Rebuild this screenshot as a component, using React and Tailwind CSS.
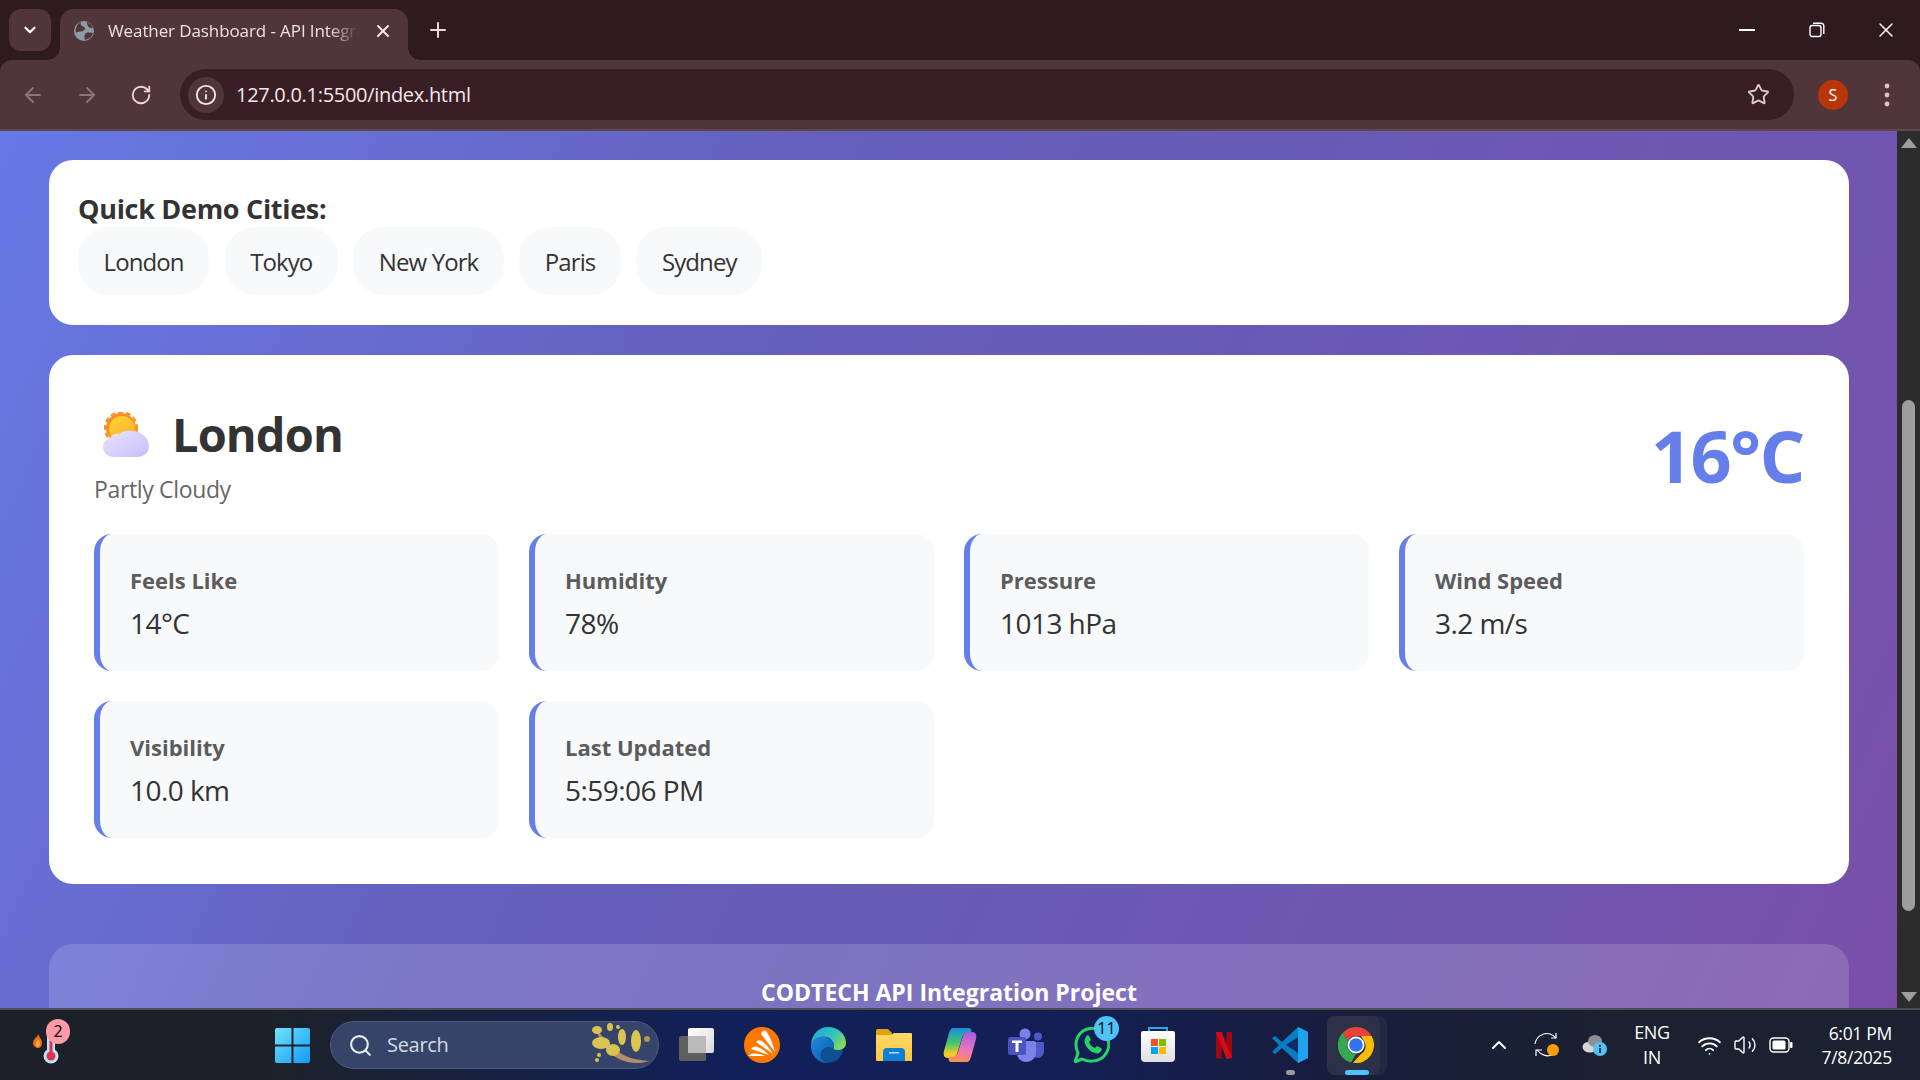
import React from 'react';
import { ArrowLeft, ArrowRight, RotateCw, Info, Star, X, Plus, ChevronDown, ChevronUp, Search, Wifi, Volume2 } from 'lucide-react';

const cities = ['London', 'Tokyo', 'New York', 'Paris', 'Sydney'];

const details = [
  { label: 'Feels Like', value: '14°C' },
  { label: 'Humidity', value: '78%' },
  { label: 'Pressure', value: '1013 hPa' },
  { label: 'Wind Speed', value: '3.2 m/s' },
  { label: 'Visibility', value: '10.0 km' },
  { label: 'Last Updated', value: '5:59:06 PM' },
];

const PartlyCloudy = () => (
  <svg width="48" height="46" viewBox="0 0 48 46">
    <defs>
      <linearGradient id="sunFill" x1="0" y1="0" x2="0.6" y2="1">
        <stop offset="0" stopColor="#fdd835" />
        <stop offset="1" stopColor="#fbb02d" />
      </linearGradient>
      <linearGradient id="cloudFill" x1="0" y1="0" x2="1" y2="1">
        <stop offset="0" stopColor="#e9e3ff" />
        <stop offset="1" stopColor="#c6c0fa" />
      </linearGradient>
    </defs>
    <circle cx="18" cy="16" r="15" fill="#fb8c1f" />
    <circle cx="18" cy="16" r="16" fill="none" stroke="#fb8c1f" strokeWidth="2" strokeDasharray="5 3" />
    <circle cx="19" cy="17" r="13" fill="url(#sunFill)" />
    <path d="M11 45C4 45 0 40 0 35c0-5 3-8 7-9 2-4 6-5 9-4 3-3 8-4 13-3 8 0 17 6 17 15 0 7-5 11-12 11z" fill="url(#cloudFill)" />
  </svg>
);

const Globe = () => (
  <svg width="22" height="22" viewBox="0 0 22 22">
    <circle cx="11" cy="11" r="10" fill="#8e9ba3" />
    <path d="M8 2c-1 3 1 4 3 5 2 1 1 3-1 4-3 1-5 0-7 2-1-5 1-9 5-11zM13 13c3-1 5 0 7 0-1 4-4 6-8 7-1-3-1-5 1-7zM14 2c3 1 5 3 6 6-2 0-4 0-5-2-1-1-1-3-1-4z" fill="#50363b" />
  </svg>
);

const ChromeDots = () => (
  <svg width="8" height="26" viewBox="0 0 8 26" fill="#e6bfc6">
    <circle cx="4" cy="4" r="2.4" />
    <circle cx="4" cy="13" r="2.4" />
    <circle cx="4" cy="22" r="2.4" />
  </svg>
);

const Restore = () => (
  <svg width="16" height="16" viewBox="0 0 16 16" fill="none" stroke="#fff" strokeWidth="1.4">
    <rect x="1" y="3.5" width="11" height="11" rx="2.2" />
    <path d="M4 1.2h8c1.6 0 2.8 1.2 2.8 2.8v8" />
  </svg>
);

const Thermo = () => (
  <div className="relative w-[44px] h-[48px]">
    <svg className="absolute left-0 top-[10px]" width="44" height="38" viewBox="0 0 44 38">
      <path d="M12 3c1 3 4 5 4 9 0 3-2 5-4 5s-5-2-5-5c0-3 2-4 3-6 1 1 1 0 2-3z" fill="#f26b21" />
      <path d="M12 8c1 2 2 3 2 4s-1 4-2 4-3-2-2-3c0-2 1-3 2-5z" fill="#fbb02d" />
      <rect x="21" y="0" width="8" height="24" rx="4" fill="#bfe3f7" />
      <circle cx="25" cy="25" r="7.5" fill="#bfe3f7" />
      <rect x="23.5" y="8" width="3" height="16" fill="#e0324f" />
      <circle cx="25" cy="25" r="4.5" fill="#e0324f" />
    </svg>
    <span className="absolute left-[20px] -top-[2px] w-[24px] h-[25px] rounded-full bg-[#ff9ba6] text-black text-[16px] leading-[25px] text-center">2</span>
  </div>
);

const WinLogo = () => (
  <svg width="35" height="35" viewBox="0 0 35 35">
    <defs>
      <linearGradient id="winFill" x1="0" y1="0" x2="1" y2="1">
        <stop offset="0" stopColor="#6fe3fb" />
        <stop offset="1" stopColor="#0f9bf6" />
      </linearGradient>
    </defs>
    <path d="M0 2a2 2 0 0 1 2-2h14.5v16.5H0zM18.500 0H33a2 2 0 0 1 2 2v14.500H18.500zM0 18.500h16.500V35H2a2 2 0 0 1-2-2zM18.500 18.500H35V33a2 2 0 0 1-2 2H18.500z" fill="url(#winFill)" />
  </svg>
);

const Blossom = () => (
  <svg width="60" height="44" viewBox="0 0 60 44">
    <path d="M4 5c7 7 12 15 22 23 8 6 18 9 32 10-8 3-20 3-30-2C16 30 9 18 4 5z" fill="#b58d6b" />
    <g fill="#d9c44f">
      <ellipse cx="6" cy="7" rx="5" ry="4" />
      <ellipse cx="19" cy="4" rx="3" ry="4" />
      <ellipse cx="31" cy="14" rx="4" ry="8" />
      <ellipse cx="45" cy="18" rx="5" ry="11" />
      <ellipse cx="10" cy="20" rx="9" ry="6" />
      <ellipse cx="22" cy="27" rx="7" ry="6" />
      <circle cx="56" cy="16" r="3" fill="#a99d4a" />
      <circle cx="27" cy="4" r="2" />
      <circle cx="8" cy="32" r="2" />
      <circle cx="6" cy="37" r="2" />
    </g>
  </svg>
);

const TaskView = () => (
  <svg width="36" height="36" viewBox="0 0 36 36">
    <defs>
      <linearGradient id="tvFront" x1="0" y1="0" x2="1" y2="1">
        <stop offset="0" stopColor="#ffffff" />
        <stop offset="1" stopColor="#d8d8d8" />
      </linearGradient>
    </defs>
    <rect x="10" y="1" width="26" height="25" rx="2" fill="url(#tvFront)" />
    <rect x="1" y="9" width="27" height="25" rx="2" fill="#5f5f5f" />
    <path d="M10 11a2 2 0 0 1 0-2h18v17H10z" fill="#b9b9b9" />
  </svg>
);

const Avast = () => (
  <svg width="36" height="36" viewBox="0 0 36 36">
    <circle cx="18" cy="18" r="18" fill="#ff7800" />
    <path d="M17 7c1-3 3-4 5-3 4 5 7 14 9 21zM12 15c2-2 4-2 6-1 4 3 8 8 11 13zM7 22c1-2 4-3 6-2 4 1 8 4 12 8zM4 29l3-2c5-1 10 0 14 2z" fill="#fff" />
  </svg>
);

const Edge = () => (
  <svg width="36" height="36" viewBox="0 0 36 36">
    <defs>
      <linearGradient id="edgeTop" x1="0" y1="0" x2="1" y2="0.6">
        <stop offset="0" stopColor="#1aa5d8" />
        <stop offset="0.6" stopColor="#35c1c1" />
        <stop offset="1" stopColor="#7edb5d" />
      </linearGradient>
      <linearGradient id="edgeLow" x1="0" y1="0" x2="1" y2="1">
        <stop offset="0" stopColor="#1f8ade" />
        <stop offset="1" stopColor="#0c59a4" />
      </linearGradient>
    </defs>
    <path d="M18 0c10 0 18 7 18 16 0 4-3 7-7 7h-6c3-6-1-12-7-13C10 9 4 12 1 17 2 7 9 0 18 0z" fill="url(#edgeTop)" />
    <path d="M1 17c3-6 9-8 15-7 4 1 8 4 8 9 0 1 0 2-1 3-4-3-11-1-12 4-1 4 2 8 6 10C8 36 0 28 1 17z" fill="url(#edgeLow)" />
    <path d="M11 26c1-5 8-7 12-4 2 1 4 1 6 1h4c-1 6-6 13-16 13-4-2-7-6-6-10z" fill="#0f4f95" />
  </svg>
);

const Folder = () => (
  <svg width="36" height="32" viewBox="0 0 36 32">
    <defs>
      <linearGradient id="folderFill" x1="0" y1="0" x2="0" y2="1">
        <stop offset="0" stopColor="#ffd968" />
        <stop offset="1" stopColor="#fcc83d" />
      </linearGradient>
    </defs>
    <path d="M0 2a2 2 0 0 1 2-2h10l4 4v4H0z" fill="#e5a20f" />
    <path d="M0 6h15l3-2h17a1 1 0 0 1 1 1v27H1a1 1 0 0 1-1-1z" fill="url(#folderFill)" />
    <path d="M7 32v-9a4 4 0 0 1 4-4h14a4 4 0 0 1 4 4v9z" fill="#0d7fd6" />
    <rect x="13" y="23" width="10" height="1.500" fill="#b7defa" />
  </svg>
);

const Copilot = () => (
  <svg width="34" height="34" viewBox="0 0 34 34">
    <defs>
      <linearGradient id="copA" x1="0.3" y1="0" x2="0.3" y2="1">
        <stop offset="0" stopColor="#1b8ae6" />
        <stop offset="0.5" stopColor="#43c86b" />
        <stop offset="0.85" stopColor="#f6c92c" />
      </linearGradient>
      <linearGradient id="copB" x1="0.6" y1="0" x2="0.4" y2="1">
        <stop offset="0" stopColor="#a85ee6" />
        <stop offset="0.6" stopColor="#ee77b7" />
        <stop offset="1" stopColor="#fb8f4a" />
      </linearGradient>
    </defs>
    <path d="M10 0h15c3 0 4 2 3 5-5-1-8 1-9 5l-5 16c-1 3-4 4-7 4H5c-4 0-5-3-4-7L6 5c1-3 2-5 4-5z" fill="url(#copA)" />
    <path d="M24 34H9c-3 0-4-2-3-5 5 1 8-1 9-5l5-16c1-3 4-4 7-4h2c4 0 5 3 4 7l-5 18c-1 3-2 5-4 5z" fill="url(#copB)" />
  </svg>
);

const Teams = () => (
  <svg width="36" height="34" viewBox="0 0 36 34">
    <circle cx="17" cy="6" r="5.500" fill="#7b83eb" />
    <circle cx="30" cy="8.500" r="4" fill="#5059c9" />
    <path d="M25 14h10a1 1 0 0 1 1 1v8c0 4-3 7-6 7s-5-2-5-4z" fill="#5059c9" />
    <path d="M9 13h17a2 2 0 0 1 2 2v10c0 5-5 9-10 9s-9-4-9-9z" fill="#7b83eb" />
    <rect x="0" y="9" width="18" height="18" rx="2" fill="#4b53bc" />
    <path d="M4 12.500h10v2.500h-3.500v9h-3v-9H4z" fill="#fff" />
  </svg>
);

const WhatsApp = () => (
  <svg width="36" height="36" viewBox="0 0 36 36">
    <path d="M1 35l3-9C0 18 2 9 9 4c8-5 18-3 23 4 5 8 3 17-4 23-6 4-14 4-20 1z" fill="none" stroke="#25d366" strokeWidth="3" strokeLinejoin="round" />
    <path d="M12 10c-2 2-2 5 0 9 2 3 5 6 9 7 3 1 5 0 6-2 1-1 1-2 0-3l-4-2-2 2c-3-1-5-3-6-6l2-2-2-4c-1-1-2-1-3 1z" fill="#25d366" />
  </svg>
);

const Store = () => (
  <svg width="36" height="36" viewBox="0 0 36 36">
    <defs>
      <linearGradient id="bagFill" x1="0" y1="0" x2="0" y2="1">
        <stop offset="0" stopColor="#ffffff" />
        <stop offset="1" stopColor="#dfdfdf" />
      </linearGradient>
    </defs>
    <path d="M9 6V1h18v5" fill="none" stroke="#29a8e8" strokeWidth="2" />
    <path d="M3 4h30a2 2 0 0 1 2 2v25a4 4 0 0 1-4 4H5a4 4 0 0 1-4-4V6a2 2 0 0 1 2-2z" fill="url(#bagFill)" />
    <rect x="11" y="12" width="7" height="7" fill="#f25022" />
    <rect x="19" y="12" width="7" height="7" fill="#7fba00" />
    <rect x="11" y="20" width="7" height="7" fill="#00a4ef" />
    <rect x="19" y="20" width="7" height="7" fill="#ffb900" />
  </svg>
);

const NetflixMark = () => (
  <svg width="16" height="27" viewBox="0 0 16 27">
    <path d="M0 0h5.500v27L0 26z" fill="#a30812" />
    <path d="M10.500 0H16v26l-5.500 1z" fill="#a30812" />
    <path d="M0 0h5.500L16 26l-5.500 1z" fill="#d80a14" />
  </svg>
);

const VsCode = () => (
  <svg width="36" height="36" viewBox="0 0 36 36">
    <path d="M26 0l10 5v26l-10 5-16-15L3 27l-3-2 7-7-7-7 3-2 7 6z" fill="#0a7cc4" />
    <path d="M26 0l10 5v26l-10 5z" fill="#1fa3ee" />
    <path d="M26 10L14 18l12 8z" fill="#0e2050" opacity="0.85" />
  </svg>
);

const ChromeLogo = () => (
  <svg width="36" height="36" viewBox="0 0 36 36">
    <path d="M18 0a18 18 0 0 1 15.600 9H18a9 9 0 0 0-8 5L4.600 6A18 18 0 0 1 18 0z" fill="#ea4335" />
    <path d="M4.600 6L10 14a9 9 0 0 0 8 13l-5 8.600A18 18 0 0 1 4.600 6z" fill="#34a853" />
    <path d="M33.600 9A18 18 0 0 1 15 35.800L23 27a9 9 0 0 0 3-13l-3-5z" fill="#fbbc04" />
    <circle cx="18" cy="18" r="8.500" fill="#fff" />
    <circle cx="18" cy="18" r="6.800" fill="#2f75e8" />
  </svg>
);

const SyncDot = () => (
  <svg width="26" height="26" viewBox="0 0 26 26">
    <g fill="none" stroke="#fff" strokeWidth="1.200">
      <path d="M1 12C2 5 9 0 16 2c2 .6 4 2 6 4" />
      <path d="M22 1v5h-5" />
      <path d="M18 23c-5 2-11 0-15-5" />
      <path d="M2 24v-6h6" />
    </g>
    <circle cx="19" cy="18" r="6" fill="#ff9d00" />
  </svg>
);

const CloudInfo = () => (
  <svg width="26" height="24" viewBox="0 0 26 24">
    <ellipse cx="8" cy="14" rx="7.500" ry="5.500" fill="#d6d6d6" />
    <ellipse cx="13" cy="8" rx="7" ry="6" fill="#8d8f94" />
    <circle cx="18" cy="16" r="7" fill="#4fc3f7" />
    <rect x="17" y="15" width="2" height="5" fill="#10243c" />
    <rect x="17" y="11.800" width="2" height="2" fill="#10243c" />
  </svg>
);

const Battery = () => (
  <svg width="24" height="16" viewBox="0 0 24 16">
    <rect x="1" y="1" width="19" height="14" rx="3.500" fill="none" stroke="#fff" strokeWidth="1.400" />
    <rect x="3.500" y="3.500" width="13" height="9" rx="1.500" fill="#fff" />
    <rect x="21" y="5" width="2.500" height="6" rx="1" fill="#fff" />
  </svg>
);

const dockIcons = [TaskView, Avast, Edge, Folder, Copilot, Teams, WhatsApp, Store, NetflixMark, VsCode];

const App = () => {
  return (
    <div className="w-[1920px] h-[1080px] flex flex-col overflow-hidden font-['Open_Sans',sans-serif]">
      {/* browser chrome */}
      <div className="h-[131px] shrink-0 bg-[#2f1a20] flex flex-col">
        <div className="h-[60px] flex items-end shrink-0">
          <div className="w-[42px] h-[42px] ml-[9px] mb-[9px] rounded-[12px] bg-[#50363b] flex items-center justify-center">
            <ChevronDown size={18} strokeWidth={3} className="text-white" />
          </div>
          <div className="relative w-[348px] h-[51px] ml-[9px] rounded-t-[14px] bg-[#50363b] flex items-center pl-[13px] pb-[8px]">
            <span className="absolute -left-[12px] bottom-0 w-[12px] h-[12px] bg-[radial-gradient(circle_at_0_0,#2f1a20_11.5px,#50363b_12px)]"></span>
            <span className="absolute -right-[12px] bottom-0 w-[12px] h-[12px] bg-[radial-gradient(circle_at_100%_0,#2f1a20_11.5px,#50363b_12px)]"></span>
            <Globe />
            <span className="ml-[12px] w-[252px] pl-[1px] text-[17px] text-[#f0dfe2] whitespace-nowrap overflow-hidden tracking-[-0.1px] [mask-image:linear-gradient(to_right,black_88%,transparent_100%)]">
              Weather Dashboard - API Integration Project
            </span>
            <X size={20} strokeWidth={2.4} className="ml-[14px] text-[#f5e6e9]" />
          </div>
          <Plus size={24} strokeWidth={2} className="ml-[18px] mb-[18px] text-[#f0d4d9]" />
          <div className="ml-auto flex items-center h-[60px]">
            <div className="w-[70px] flex justify-center"><div className="w-[16px] h-[2px] bg-white"></div></div>
            <div className="w-[70px] flex justify-center"><Restore /></div>
            <div className="w-[68px] flex justify-center"><X size={24} strokeWidth={1.5} className="text-white" /></div>
          </div>
        </div>
        <div className="flex-1 bg-[#50363b] rounded-t-[12px] border-b-2 border-[#5d474b] flex items-center">
          <div className="w-[180px] shrink-0 flex items-center text-[#8f7478] pl-[21px]">
            <ArrowLeft size={24} strokeWidth={1.8} />
            <ArrowRight size={24} strokeWidth={1.8} className="ml-[30px]" />
            <RotateCw size={22} strokeWidth={2} className="ml-[31px] text-[#f0d4d9]" />
          </div>
          <div className="w-[1614px] h-[51px] rounded-full bg-[#381f25] flex items-center pl-[8px]">
            <div className="w-[36px] h-[36px] rounded-full bg-[#50363b] flex items-center justify-center">
              <Info size={22} strokeWidth={2} className="text-[#f5e6e9]" />
            </div>
            <span className="ml-[12px] text-[20px] text-[#f5e6e9] tracking-[-0.3px]">127.0.0.1:5500/index.html</span>
            <Star size={23} strokeWidth={2} className="ml-auto mr-[24px] text-[#dcc6ca]" />
          </div>
          <div className="ml-[24px] w-[30px] h-[30px] rounded-full bg-[#bb350b] text-white text-[16px] flex items-center justify-center">S</div>
          <div className="ml-[35px]"><ChromeDots /></div>
        </div>
      </div>

      {/* page */}
      <div className="flex-1 min-h-0 flex">
        <div className="w-[1897px] h-full overflow-hidden pl-[49px] pr-[48px] pt-[29px] bg-[linear-gradient(115deg,#6679e6_0%,#686dd2_18%,#6460bd_35%,#675cb6_52%,#7056b0_82%,#7a4ea8_100%)]">
          <div className="h-[165px] bg-white rounded-[24px] pl-[29px] pr-[30px] pt-[30px]">
            <h3 className="text-[27px] leading-[37px] font-bold text-[#333] tracking-[-0.3px]">Quick Demo Cities:</h3>
            <div className="flex gap-[15.500px]">
              {cities.map((city) => (
                <button key={city} className="h-[68px] px-[25.500px] pt-[1px] rounded-[31px] bg-[#f8f9fa] text-[24px] text-[#333] tracking-[-0.9px]">
                  {city}
                </button>
              ))}
            </div>
          </div>

          <div className="mt-[30px] h-[529px] bg-white rounded-[24px] p-[45px]">
            <div className="flex items-center justify-between h-[134px] pb-[30px]">
              <div>
                <div className="flex items-center h-[70px]">
                  <div className="ml-[9px] mr-[21px]"><PartlyCloudy /></div>
                  <h2 className="pb-[2px] text-[47px] font-bold text-[#333] leading-none tracking-[-0.9px]">London</h2>
                </div>
                <p className="mt-[4px] text-[23px] text-[#666] leading-[30px] tracking-[-0.35px]">Partly Cloudy</p>
              </div>
              <div className="pt-[6px] text-[72px] font-bold text-[#667eea] leading-none tracking-[-1.5px]">16°C</div>
            </div>
            <div className="grid grid-cols-4 gap-x-[30px] gap-y-[30px]">
              {details.map((item) => (
                <div key={item.label} className="h-[137px] bg-[#f8f9fa] rounded-[18px] border-l-[6px] border-[#667eea] pl-[30px] pt-[31px]">
                  <div className="text-[22px] font-bold text-[#5c5c5c] leading-[30px]">{item.label}</div>
                  <div className="mt-[10px] text-[28px] text-[#333] leading-[36px] tracking-[-0.55px]">{item.value}</div>
                </div>
              ))}
            </div>
          </div>

          <div className="mt-[60px] h-[100px] rounded-t-[24px] bg-white/15 pt-[30px] text-center">
            <p className="text-[23px] leading-[36px] font-bold text-white">CODTECH API Integration Project</p>
          </div>
        </div>

        {/* scrollbar */}
        <div className="w-[23px] h-full bg-[#2c2c2c] flex flex-col items-center">
          <div className="mt-[7px] w-0 h-0 border-x-[8px] border-x-transparent border-b-[10px] border-b-[#9e9e9e]"></div>
          <div className="mt-[252px] w-[13px] h-[511px] rounded-full bg-[#9e9e9e]"></div>
          <div className="mt-[81px] w-0 h-0 border-x-[8px] border-x-transparent border-t-[10px] border-t-[#9e9e9e]"></div>
        </div>
      </div>

      {/* taskbar */}
      <div className="h-[72px] shrink-0 border-t-2 border-[#4c4d55] bg-[linear-gradient(to_right,#1c2129_0%,#1c2129_14%,#12205a_38%,#131f55_55%,#181d3c_70%,#1b2130_85%,#1b2130_100%)] flex items-center text-white">
        <div className="w-[259px] shrink-0 pl-[26px]"><Thermo /></div>
        <div className="w-[66px] shrink-0 flex justify-center"><WinLogo /></div>
        <div className="ml-[5px] w-[329px] h-[48px] shrink-0 rounded-full bg-[#36446a] border border-[#4d5b80] flex items-center pl-[17px]">
          <Search size={25} strokeWidth={2} className="text-[#e8ebf0]" />
          <span className="ml-[14px] text-[20px] text-[#d6d9e0] tracking-[-0.3px]">Search</span>
          <div className="ml-auto mr-[7px]"><Blossom /></div>
        </div>
        <div className="ml-[4px] flex shrink-0">
          {dockIcons.map((Icon, i) => (
            <div key={i} className="relative w-[66px] h-[60px] flex items-center justify-center">
              <Icon />
              {i === 6 && (
                <span className="absolute left-[35px] top-[1px] w-[25px] h-[25px] rounded-full bg-[#4fc3f7] text-black text-[16px] leading-[25px] text-center">11</span>
              )}
              {i === 9 && <span className="absolute left-[29px] bottom-0 w-[9px] h-[5px] rounded-full bg-[#9a9aa0]"></span>}
            </div>
          ))}
          <div className="relative w-[66px] h-[60px] flex items-center justify-center">
            <div className="absolute left-[4px] w-[60px] h-[59px] rounded-[8px] bg-[#232945]"></div>
            <div className="absolute left-[4px] w-[53px] h-[59px] rounded-[8px] bg-[#2c3147]"></div>
            <div className="relative"><ChromeLogo /></div>
            <span className="absolute left-[22px] bottom-0 w-[24px] h-[5px] rounded-full bg-[#4cc2ff]"></span>
          </div>
        </div>
        <div className="ml-[86px] flex items-center shrink-0">
          <div className="w-[48px] flex justify-center"><ChevronUp size={24} strokeWidth={2} /></div>
          <div className="w-[48px] flex justify-center"><SyncDot /></div>
          <div className="w-[48px] flex justify-center"><CloudInfo /></div>
          <div className="w-[66px] text-center text-[18px] leading-[25px] tracking-[-0.3px]">ENG<br />IN</div>
          <div className="w-[48px] flex justify-center"><Wifi size={25} strokeWidth={1.8} /></div>
          <div className="w-[24px] flex justify-center"><Volume2 size={26} strokeWidth={1.4} /></div>
          <div className="w-[48px] flex justify-center"><Battery /></div>
          <div className="w-[87px] text-right text-[17.500px] leading-[24px] tracking-[-0.3px] whitespace-nowrap">6:01 PM<br />7/8/2025</div>
        </div>
      </div>
    </div>
  );
};

export default App;
